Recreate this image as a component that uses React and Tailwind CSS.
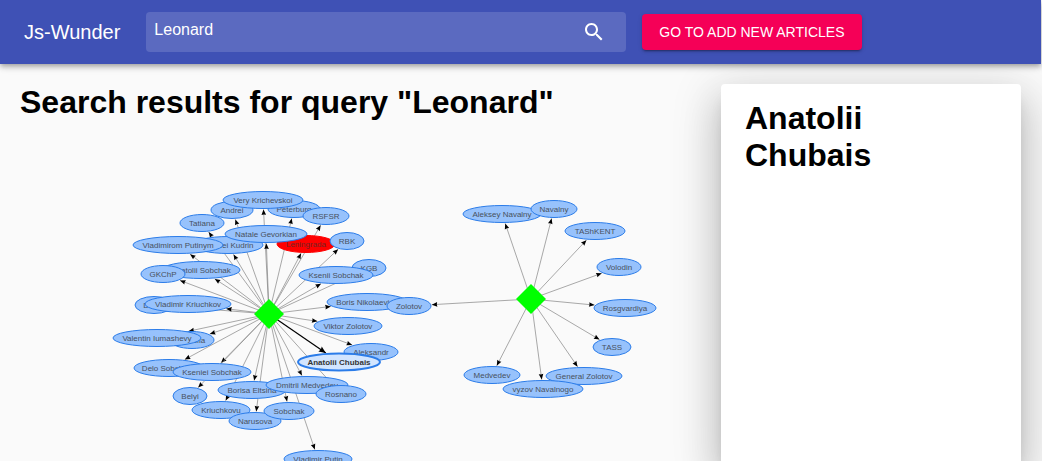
const HUBS = [
  { id: 'a', x: 269, y: 314 },
  { id: 'b', x: 531, y: 299 },
];

const NODES = [
  { label: 'Andrei', x: 232, y: 210, rx: 21, hub: 'a' },
  { label: 'Peterburg', x: 294, y: 209, rx: 26, hub: 'a' },
  { label: 'Very Krichevskoi', x: 263, y: 200, rx: 40, hub: 'a' },
  { label: 'RSFSR', x: 326, y: 216, rx: 23, hub: 'a' },
  { label: 'Tatiana', x: 202, y: 223, rx: 22, hub: 'a' },
  { label: 'Aleksei Kudrin', x: 228, y: 245, rx: 35, hub: 'a' },
  { label: 'Vladimirom Putinym', x: 178, y: 245, rx: 45, hub: 'a' },
  { label: 'Leningrada', x: 306, y: 244, rx: 29, hub: 'a', kind: 'alert' },
  { label: 'Natale Gevorkian', x: 266, y: 234, rx: 41, hub: 'a' },
  { label: 'RBK', x: 347, y: 241, rx: 17, hub: 'a' },
  { label: 'KGB', x: 369, y: 268, rx: 17, hub: 'a' },
  { label: 'Ksenii Sobchak', x: 336, y: 275, rx: 37, hub: 'a' },
  { label: 'Anatolii Sobchak', x: 201, y: 270, rx: 39, hub: 'a' },
  { label: 'GKChP', x: 163, y: 274, rx: 22, hub: 'a' },
  { label: 'Duma', x: 154, y: 305, rx: 19, hub: 'a' },
  { label: 'Vladimir Kriuchkov', x: 188, y: 304, rx: 43, hub: 'a' },
  { label: 'Rossiia', x: 192, y: 340, rx: 22, hub: 'a' },
  { label: 'Valentin Iumashevy', x: 157, y: 338, rx: 44, hub: 'a' },
  { label: 'Delo Sobchaka', x: 169, y: 368, rx: 35, hub: 'a' },
  { label: 'Kseniei Sobchak', x: 212, y: 372, rx: 39, hub: 'a' },
  { label: 'Belyi', x: 190, y: 396, rx: 17, hub: 'a' },
  { label: 'Kriuchkovu', x: 221, y: 410, rx: 29, hub: 'a' },
  { label: 'Borisa Eltsina', x: 252, y: 390, rx: 34, hub: 'a' },
  { label: 'Narusova', x: 255, y: 421, rx: 26, hub: 'a' },
  { label: 'Sobchak', x: 289, y: 411, rx: 25, hub: 'a' },
  { label: 'Dmitrii Medvedev', x: 307, y: 385, rx: 41, hub: 'a' },
  { label: 'Rosnano', x: 341, y: 394, rx: 25, hub: 'a' },
  { label: 'Vladimir Putin', x: 318, y: 459, rx: 34, hub: 'a' },
  { label: 'Aleksandr', x: 371, y: 352, rx: 27, hub: 'a' },
  { label: 'Viktor Zolotov', x: 348, y: 326, rx: 34, hub: 'a' },
  { label: 'Boris Nikolaevich', x: 367, y: 302, rx: 40, hub: 'a' },
  { label: 'Zolotov', x: 409, y: 306, rx: 22, hub: 'b' },
  { label: 'Anatolii Chubais', x: 339, y: 362, rx: 41, hub: 'a', kind: 'selected' },
  { label: 'Aleksey Navalny', x: 502, y: 214, rx: 39, hub: 'b' },
  { label: 'Navalny', x: 554, y: 209, rx: 23, hub: 'b' },
  { label: 'TAShKENT', x: 595, y: 231, rx: 30, hub: 'b' },
  { label: 'Volodin', x: 619, y: 267, rx: 22, hub: 'b' },
  { label: 'Rosgvardiya', x: 625, y: 308, rx: 31, hub: 'b' },
  { label: 'TASS', x: 612, y: 347, rx: 19, hub: 'b' },
  { label: 'Medvedev', x: 492, y: 375, rx: 28, hub: 'b' },
  { label: 'General Zolotov', x: 584, y: 376, rx: 38, hub: 'b' },
  { label: 'vyzov Navalnogo', x: 543, y: 389, rx: 40, hub: 'b' },
];

const RY = 8.5;
const TOP = 140;

const STYLES = {
  normal: { ellipse: 'fill-[#97c2fc] stroke-[#2b7ce9]', width: 1, text: 'fill-[#343434] opacity-80' },
  alert: { ellipse: 'fill-[#ff0000] stroke-[#ff0000]', width: 1, text: 'fill-[#343434] opacity-70' },
  selected: { ellipse: 'fill-[#d2e5ff] stroke-[#2b7ce9]', width: 2, text: 'fill-[#343434] font-bold' },
};

// Point where the line from the hub meets the border of the node.
function borderPoint(hub, node) {
  const dx = node.x - hub.x;
  const dy = node.y - hub.y;
  const t = 1 - 1 / Math.hypot(dx / (node.rx + 1), dy / (RY + 1));
  return { x: hub.x + dx * t, y: hub.y + dy * t, angle: (Math.atan2(dy, dx) * 180) / Math.PI };
}

function Edge({ node }) {
  const hub = HUBS.find((h) => h.id === node.hub);
  const tip = borderPoint(hub, node);
  const selected = node.kind === 'selected';
  return (
    <g>
      <line
        x1={hub.x}
        y1={hub.y}
        x2={tip.x}
        y2={tip.y}
        className={selected ? 'stroke-black' : 'stroke-[#848484]'}
        strokeWidth={selected ? 1.2 : 0.7}
      />
      <path
        d={selected ? 'M0 0L-7 3L-6 0L-7 -3Z' : 'M0 0L-5.5 2.3L-5 0L-5.5 -2.3Z'}
        className="fill-black"
        transform={`translate(${tip.x} ${tip.y}) rotate(${tip.angle})`}
      />
    </g>
  );
}

function Node({ node }) {
  const style = STYLES[node.kind || 'normal'];
  return (
    <g>
      <ellipse cx={node.x} cy={node.y} rx={node.rx} ry={RY} strokeWidth={style.width} className={style.ellipse} />
      <text x={node.x} y={node.y + 3} textAnchor="middle" className={`text-[8px] ${style.text}`}>
        {node.label}
      </text>
    </g>
  );
}

function Graph() {
  return (
    <svg
      width="680"
      height="340"
      viewBox={`0 ${TOP} 680 340`}
      className="block shrink-0"
      role="img"
      aria-label="Graph of people and places"
    >
      {NODES.map((node) => (
        <Edge key={node.label} node={node} />
      ))}
      {NODES.map((node) => (
        <Node key={node.label} node={node} />
      ))}
      {HUBS.map(({ id, x, y }) => (
        <path
          key={id}
          d={`M${x} ${y - 15}L${x + 15} ${y}L${x} ${y + 15}L${x - 15} ${y}Z`}
          className="fill-[#00ff00]"
        />
      ))}
    </svg>
  );
}

function Header() {
  return (
    <header className="relative z-10 flex h-16 items-center bg-[#3f51b5] px-6 text-white shadow-[0_2px_4px_-1px_rgba(0,0,0,0.2),0_4px_5px_0_rgba(0,0,0,0.14),0_1px_10px_0_rgba(0,0,0,0.12)]">
      <p className="text-xl whitespace-nowrap">Js-Wunder</p>
      <form
        className="ml-[26px] flex h-10 w-120 items-center rounded bg-white/15"
        onSubmit={(event) => event.preventDefault()}
      >
        <input
          type="text"
          aria-label="Search"
          defaultValue="Leonard"
          className="mb-1 h-8 min-w-0 flex-1 bg-transparent px-2 text-base outline-none"
        />
        <button type="submit" aria-label="Search" className="mr-5">
          <svg viewBox="0 0 24 24" className="size-6 fill-white">
            <path d="M15.5 14h-.79l-.28-.27C15.41 12.59 16 11.11 16 9.5 16 5.91 13.09 3 9.5 3S3 5.91 3 9.5 5.91 16 9.5 16c1.61 0 3.09-.59 4.23-1.57l.27.28v.79l5 4.99L20.49 19l-4.99-5zm-6 0C7.01 14 5 11.99 5 9.5S7.01 5 9.5 5 14 7.01 14 9.5 11.99 14 9.5 14z" />
          </svg>
        </button>
      </form>
      <button
        type="button"
        className="ml-4 h-9 rounded bg-[#f50057] px-[17px] text-sm whitespace-nowrap uppercase shadow-[0_3px_1px_-2px_rgba(0,0,0,0.2),0_2px_2px_0_rgba(0,0,0,0.14),0_1px_5px_0_rgba(0,0,0,0.12)]"
      >
        Go to add new articles
      </button>
    </header>
  );
}

export default function App() {
  return (
    <div className="flex h-screen flex-col overflow-hidden bg-[#fafafa] pr-px font-['Liberation_Sans',Arial,sans-serif] text-black">
      <Header />
      <div className="flex min-h-0 flex-1">
        <main className="min-w-0 flex-1 overflow-hidden">
          <h1 className="p-5 text-[32px] leading-9 font-bold">Search results for query "Leonard"</h1>
          <Graph />
        </main>
        <aside className="mt-5 mr-5 w-75 shrink-0 rounded-t bg-white px-6 py-4 shadow-[0_11px_15px_-7px_rgba(0,0,0,0.2),0_24px_38px_3px_rgba(0,0,0,0.14),0_9px_46px_8px_rgba(0,0,0,0.12)]">
          <h2 className="w-min text-[32px] leading-[37px] font-bold">Anatolii Chubais</h2>
        </aside>
      </div>
    </div>
  );
}
